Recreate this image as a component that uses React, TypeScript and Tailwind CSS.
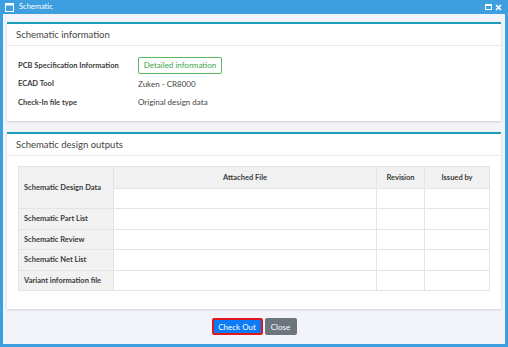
import React from 'react'

const infoRows = [
    { label: 'PCB Specification Information', value: null },
    { label: 'ECAD Tool', value: 'Zuken - CR8000' },
    { label: 'Check-In file type', value: 'Original design data' },
]

const outputRows = ['Schematic Part List', 'Schematic Review', 'Schematic Net List', 'Variant information file']

const App = () => {
    return (
        <div className="w-[508px] h-[347px] bg-[#3d9ee0] flex flex-col px-[3px] pb-[3px] font-['Lato',sans-serif]">
            <div className="h-[14px] flex items-center text-white">
                <svg width="9" height="9" viewBox="0 0 9 9" className="ml-[2px]">
                    <rect x="0.5" y="0.5" width="8" height="8" fill="none" stroke="white" />
                    <rect x="0.5" y="0.5" width="8" height="2" fill="white" />
                </svg>
                <span className="ml-[5px] text-[7.5px] leading-none">Schematic</span>
                <div className="ml-auto flex items-center gap-[3px] mr-[3px]">
                    <svg width="7" height="6" viewBox="0 0 7 6">
                        <rect x="0.5" y="0.5" width="6" height="5" fill="none" stroke="white" />
                        <rect x="0.5" y="0.5" width="6" height="1.5" fill="white" />
                    </svg>
                    <svg width="7" height="7" viewBox="0 0 7 7">
                        <path d="M1 1 L6 6 M6 1 L1 6" stroke="white" strokeWidth="1.6" />
                    </svg>
                </div>
            </div>
            <div className="flex-1 bg-[#f3f4f9] flex flex-col px-[4px] pt-[8px]">
                <section className="h-[99px] bg-white border-t-2 border-[#1b9db5] shadow-[0_1px_2px_rgba(0,0,0,0.15)]">
                    <h2 className="h-[22px] flex items-center pl-[9px] pt-[1px] text-[9.5px] text-[#444] border-b border-[#e8e8e8]">Schematic information</h2>
                    <div className="pl-[11px] pt-[10px] flex flex-col">
                        {infoRows.map((row) => (
                            <div key={row.label} className="flex items-center h-[18.5px]">
                                <span className="w-[120px] text-[7.5px] font-bold text-[#3a3a3a]">{row.label}</span>
                                {row.value ? (
                                    <span className="text-[8px] text-[#444]">{row.value}</span>
                                ) : (
                                    <span className="h-[17px] w-[84px] text-[8px] justify-center flex items-center border border-[#5cb85c] rounded-[2px] text-[#3aa64a]">Detailed information</span>
                                )}
                            </div>
                        ))}
                    </div>
                </section>
                <section className="mt-[11px] h-[177px] bg-white border-t-2 border-[#1b9db5] shadow-[0_1px_2px_rgba(0,0,0,0.15)]">
                    <h2 className="h-[22px] flex items-center pl-[9px] pt-[1px] text-[9.5px] text-[#444] border-b border-[#e8e8e8]">Schematic design outputs</h2>
                    <div className="px-[11px] pt-[10px]">
                        <table className="w-full border-collapse text-[7.5px] text-[#3a3a3a]">
                            <tbody>
                                <tr className="h-[22px]">
                                    <th rowSpan={2} className="w-[95px] bg-[#f1f1f1] border border-[#e4e4e4] text-left pl-[5px] font-bold">Schematic Design Data</th>
                                    <th className="bg-[#f1f1f1] border border-[#e4e4e4] font-bold">Attached File</th>
                                    <th className="w-[48px] bg-[#f1f1f1] border border-[#e4e4e4] font-bold">Revision</th>
                                    <th className="w-[65px] bg-[#f1f1f1] border border-[#e4e4e4] font-bold">Issued by</th>
                                </tr>
                                <tr className="h-[20px]">
                                    <td className="border border-[#e4e4e4]"></td>
                                    <td className="border border-[#e4e4e4]"></td>
                                    <td className="border border-[#e4e4e4]"></td>
                                </tr>
                                {outputRows.map((r) => (
                                    <tr key={r} className="h-[20.5px]">
                                        <th className="bg-[#f1f1f1] border border-[#e4e4e4] text-left pl-[5px] font-bold">{r}</th>
                                        <td className="border border-[#e4e4e4]"></td>
                                        <td className="border border-[#e4e4e4]"></td>
                                        <td className="border border-[#e4e4e4]"></td>
                                    </tr>
                                ))}
                            </tbody>
                        </table>
                    </div>
                </section>
                <div className="flex justify-center gap-[2px] mt-[9px]">
                    <button className="h-[17px] w-[51px] bg-[#0d7bf5] text-white text-[8px] border-2 border-[#e0181e] rounded-[2px]">Check Out</button>
                    <button className="h-[17px] w-[32px] bg-[#6c757d] text-white text-[8px] rounded-[2px]">Close</button>
                </div>
            </div>
        </div>
    )
}

export default App
